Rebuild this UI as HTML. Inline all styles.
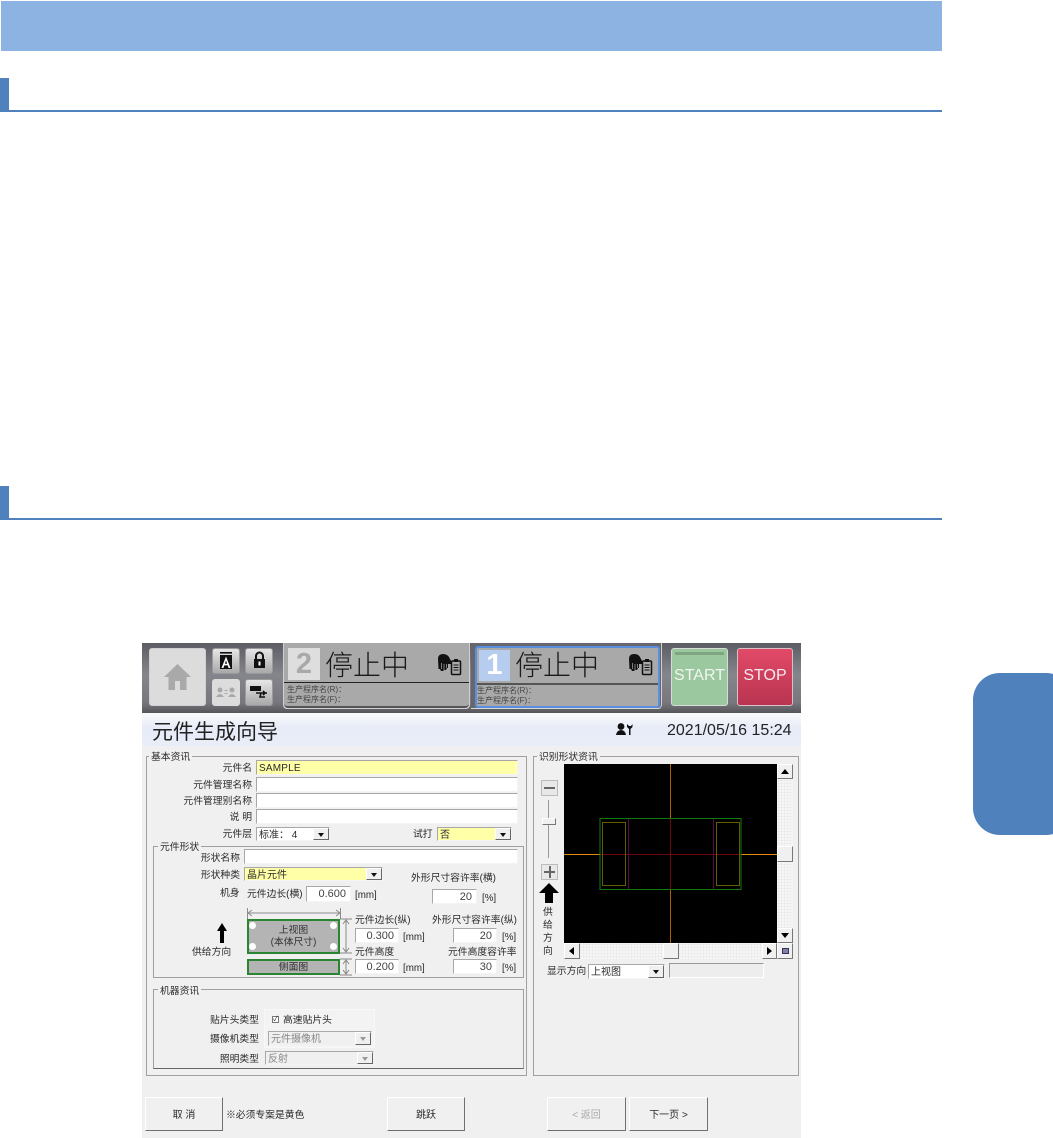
<!DOCTYPE html>
<html><head><meta charset="utf-8"><title>元件生成向导</title>
<style>
html,body{margin:0;padding:0;background:#fff;}
body{width:1053px;height:1138px;position:relative;overflow:hidden;font-family:"Liberation Sans","Noto Sans CJK SC",sans-serif;}
div,span.t{position:absolute;box-sizing:border-box;}
.t{font-size:9.8px;line-height:12px;height:12px;color:#2a2a2a;white-space:nowrap;margin-top:2px;}
.r{text-align:right;}
.c{text-align:center;}
.i{background:#fff;border:1px solid;border-color:#a8a8a8 #f4f4f4 #f4f4f4 #a8a8a8;font-size:10px;line-height:15px;color:#2a2a2a;white-space:nowrap;padding:0 2px;}
.y{background:#ffffa8;}
.n{text-align:right;font-size:11px;padding-right:4px;color:#444;}
.arr{width:16px;top:0;bottom:0;right:0;background:#f0f0f0;border:1px solid;border-color:#fff #666 #666 #fff;}
.arr:after{content:"";position:absolute;left:4px;top:4px;border:3.5px solid transparent;border-top:4px solid #111;border-bottom:0;}
.dis .arr:after{border-top-color:#999;}
.fs{border:1px solid #a0a0a0;}
.lg{background:#f0f0f0;padding:0 2px;}
.hb{background:linear-gradient(#e6e6e6,#a9a9a9);border:1px solid #9a9a9e;border-radius:3px;}
.b{background:#f0f0f0;border:1px solid;border-color:#fff #707070 #707070 #fff;font-size:10px;color:#2a2a2a;text-align:center;line-height:35px;}
.sb{background:#f0f0f0;border:1px solid;border-color:#fff #777 #777 #fff;}
.ck{background-color:#f6f6f6;background-image:radial-gradient(#e8e8e8 1px,transparent 1px);background-size:3px 3px;}
</style></head>
<body>
<div style="left:1px;top:1px;width:941px;height:50px;background:#8db3e2"></div>
<div style="left:0;top:78px;width:9px;height:34px;background:#4f81bd"></div>
<div style="left:0;top:110px;width:942px;height:2px;background:#4f81bd"></div>
<div style="left:0;top:486px;width:9px;height:34px;background:#4f81bd"></div>
<div style="left:0;top:518px;width:942px;height:2px;background:#4f81bd"></div>
<div style="left:973px;top:673px;width:100px;height:162px;background:#4f81bd;border-radius:27px"></div>

<div id="app" style="left:142px;top:643px;width:659px;height:495px;background:#f0f0f0;overflow:hidden"></div>

<!-- header -->
<div style="left:142px;top:643px;width:659px;height:70px;background:linear-gradient(#5c5c64,#85858c 45%,#77777d 85%,#55555a)"></div>
<div style="left:142px;top:713px;width:659px;height:33px;background:linear-gradient(#fbfbfb,#e7ecf8 45%,#e8edf8)"></div>

<div style="left:149px;top:648px;width:57px;height:58px;background:#dcdcdc;border-radius:3px;border:1px solid #d0d0d0"></div>
<svg style="position:absolute;left:163px;top:663px" width="29" height="28" viewBox="0 0 29 28"><path d="M14.5 1 L28 14 H23.5 V27 H17 V18 H12 V27 H5.5 V14 H1 Z" fill="#a9a9a9"/></svg>
<div class="hb" style="left:212px;top:648px;width:28px;height:26px"></div>
<svg style="position:absolute;left:219px;top:652px" width="14" height="18" viewBox="0 0 14 18"><rect x="1" y="0" width="12" height="1.6" fill="#111"/><rect x="1" y="3" width="12" height="14" fill="#111"/><path d="M7 4.5 L11.5 16 H9.6 L8.7 13.4 H5.3 L4.4 16 H2.5 Z M5.9 11.8 H8.1 L7 8.4 Z" fill="#fff" fill-rule="evenodd"/></svg>
<div class="hb" style="left:245px;top:648px;width:28px;height:26px"></div>
<svg style="position:absolute;left:253px;top:651px" width="13" height="18" viewBox="0 0 13 18"><path d="M3 8 V5 a3.5 3.5 0 0 1 7 0 V8" fill="none" stroke="#111" stroke-width="2"/><rect x="1" y="8" width="11" height="9" fill="#111"/><rect x="5.5" y="10.5" width="2" height="4" fill="#fff"/></svg>
<div style="left:212px;top:679px;width:28px;height:27px;background:#dcdcdc;border-radius:3px"></div>
<svg style="position:absolute;left:216px;top:687px" width="21" height="11" viewBox="0 0 21 11"><circle cx="4" cy="3" r="2.5" fill="#a9a9a9"/><path d="M0 10 Q4 4 8 10Z" fill="#a9a9a9"/><circle cx="16" cy="3" r="2.5" fill="#a9a9a9"/><path d="M12 10 Q16 4 20 10Z" fill="#a9a9a9"/><rect x="8.5" y="3" width="3" height="1" fill="#a9a9a9"/><rect x="8.5" y="6" width="3" height="1" fill="#a9a9a9"/></svg>
<div class="hb" style="left:245px;top:679px;width:28px;height:27px"></div>
<svg style="position:absolute;left:249px;top:685px" width="20" height="15" viewBox="0 0 20 15"><rect x="1" y="1" width="11" height="5" fill="#111"/><path d="M7 8 H18 M12 8 L11 12 H16 M14 6 L16 8 L14 10" stroke="#111" stroke-width="1.6" fill="none"/></svg>

<!-- panel 2 -->
<div style="left:283px;top:643px;width:187px;height:66px;background:#d0d0d0;border-radius:0 0 4px 4px"></div>
<div style="left:284px;top:643px;width:185px;height:65px;background:#a9a9a9;border-radius:0 0 4px 4px;border-bottom:2px solid #555"></div>
<div style="left:284px;top:682px;width:185px;height:1px;background:#222"></div>
<div style="left:288px;top:648px;width:32px;height:32px;background:#dedede;color:#a9a9a9;font:bold 29px/32px 'Liberation Sans';text-align:center">2</div>
<div class="t" style="margin:0;left:325px;top:647px;height:34px;font-size:28px;line-height:34px;color:#1a1a1a;font-family:'Noto Sans CJK SC',sans-serif;font-weight:300">停止中</div>
<svg style="position:absolute;left:437px;top:653px" width="26" height="23" viewBox="0 0 26 23"><path d="M1 6 Q1 1 6 1 Q10 1 12 4 L14 8 V11 H11 V15 H10 L9 17 H7 L6 18 H4 L3 16 H1.5Z" fill="#111"/><path d="M4.5 10V16M7 11V17M9.5 11V15" stroke="#a9a9a9" stroke-width=".7"/><rect x="14.5" y="8" width="9" height="13.5" rx="1" fill="none" stroke="#111" stroke-width="1.5"/><rect x="17" y="6" width="4" height="3" fill="#111"/><path d="M16.5 12H21.5M16.5 14.5H21.5M16.5 17H21.5" stroke="#111"/></svg>
<div class="t" style="margin-top:1px;left:287px;top:684px;font-size:8px;line-height:10px;color:#444;height:20px">生产程序名(R)：<br>生产程序名(F)：</div>

<!-- panel 1 -->
<div style="left:471px;top:643px;width:191px;height:66px;background:#66666c;border-right:1px solid #d0d0d0;border-bottom:1px solid #d8d8d8;border-radius:0 0 4px 0"></div>
<div style="left:475px;top:646px;width:185px;height:62px;background:#a9a9a9;border:2px solid #5a8fe0;border-radius:3px"></div>
<div style="left:477px;top:683px;width:181px;height:2px;background:#555"></div>
<div style="left:479px;top:650px;width:31px;height:31px;background:#b6cdf0;color:#fff;font:bold 29px/31px 'Liberation Sans';text-align:center">1</div>
<div class="t" style="margin:0;left:515px;top:647px;height:34px;font-size:28px;line-height:34px;color:#1a1a1a;font-family:'Noto Sans CJK SC',sans-serif;font-weight:300">停止中</div>
<svg style="position:absolute;left:628px;top:653px" width="26" height="23" viewBox="0 0 26 23"><path d="M1 6 Q1 1 6 1 Q10 1 12 4 L14 8 V11 H11 V15 H10 L9 17 H7 L6 18 H4 L3 16 H1.5Z" fill="#111"/><path d="M4.5 10V16M7 11V17M9.5 11V15" stroke="#a9a9a9" stroke-width=".7"/><rect x="14.5" y="8" width="9" height="13.5" rx="1" fill="none" stroke="#111" stroke-width="1.5"/><rect x="17" y="6" width="4" height="3" fill="#111"/><path d="M16.5 12H21.5M16.5 14.5H21.5M16.5 17H21.5" stroke="#111"/></svg>
<div class="t" style="margin-top:0;left:477px;top:686px;font-size:8px;line-height:10px;color:#444;height:20px">生产程序名(R)：<br>生产程序名(F)：</div>

<!-- start stop -->
<div style="left:671px;top:648px;width:57px;height:58px;background:#9bc89e;border:1px solid #d6dcd6;border-radius:3px"></div>
<div style="left:675px;top:652px;width:49px;height:3px;background:#7fa583"></div>
<div class="t c" style="margin:0;left:671px;top:667px;width:57px;height:18px;font-size:16px;line-height:18px;color:#f2f6f2">START</div>
<div style="left:737px;top:648px;width:56px;height:58px;background:linear-gradient(#e24a68,#b83450);border:1px solid #d8c0c6;border-radius:3px"></div>
<div class="t c" style="margin:0;left:737px;top:667px;width:56px;height:18px;font-size:16px;line-height:18px;color:#f6ecee">STOP</div>

<!-- title -->
<div class="t" style="margin-top:1px;left:152px;top:719px;height:26px;font-size:21px;line-height:26px;color:#222">元件生成向导</div>
<svg style="position:absolute;left:616px;top:723px" width="17" height="13" viewBox="0 0 17 13"><circle cx="5" cy="3.5" r="3.4" fill="#111"/><path d="M0 12 Q1 7 5 7 Q9 7 10 12Z" fill="#111"/><path d="M11 1 V4 L13 6 V12 H14.5 V6 L16.5 4 V1 L15 3 H13 Z" fill="#111"/></svg>
<div class="t" style="left:667px;top:720px;height:18px;font-size:16px;line-height:18px;color:#222">2021/05/16 15:24</div>

<!-- left fieldset -->
<div class="fs" style="left:146px;top:756px;width:381px;height:320px"></div>
<div class="t lg" style="left:149px;top:750px">基本资讯</div>

<div class="t r" style="left:160px;top:761px;width:92px">元件名</div>
<div class="i y" style="left:256px;top:760px;width:262px;height:15px;letter-spacing:.2px">SAMPLE</div>
<div class="t r" style="left:160px;top:778px;width:92px">元件管理名称</div>
<div class="i" style="left:256px;top:777px;width:262px;height:15px"></div>
<div class="t r" style="left:160px;top:794px;width:92px">元件管理别名称</div>
<div class="i" style="left:256px;top:793px;width:262px;height:15px"></div>
<div class="t r" style="left:160px;top:810px;width:92px">说 明</div>
<div class="i" style="left:256px;top:809px;width:262px;height:15px"></div>
<div class="t r" style="left:160px;top:827px;width:92px">元件层</div>
<div class="i" style="left:256px;top:827px;width:74px;height:14px">标准： 4<div class="arr"></div></div>
<div class="t" style="left:413px;top:827px">试打</div>
<div class="i y" style="left:437px;top:827px;width:75px;height:14px">否<div class="arr"></div></div>

<!-- shape fieldset -->
<div class="fs" style="left:153px;top:846px;width:371px;height:132px"></div>
<div class="t lg" style="left:158px;top:840px">元件形状</div>
<div class="t r" style="left:170px;top:851px;width:70px">形状名称</div>
<div class="i" style="left:244px;top:849px;width:274px;height:15px"></div>
<div class="t r" style="left:170px;top:868px;width:70px">形状种类</div>
<div class="i y" style="left:244px;top:867px;width:139px;height:14px">晶片元件<div class="arr"></div></div>
<div class="t" style="left:411px;top:871px">外形尺寸容许率(横)</div>
<div class="t" style="left:220px;top:886px">机身</div>
<div class="t" style="left:247px;top:887px">元件边长(横)</div>
<div class="i n" style="left:306px;top:886px;width:45px;height:16px">0.600</div>
<div class="t" style="left:355px;top:888px">[mm]</div>
<div class="i n" style="left:432px;top:889px;width:45px;height:15px;line-height:14px">20</div>
<div class="t" style="left:482px;top:891px">[%]</div>

<!-- diagram -->
<svg style="position:absolute;left:190px;top:905px" width="170" height="75" viewBox="0 0 170 75">
<path d="M57.5 3V14M150.5 3V14M58 8H150M62 5L58 8L62 11M146 5L150 8L146 11" fill="none" stroke="#8c8c8c"/>
<path d="M150 14H162M150 48H162M150 54H162M150 70H162" stroke="#888"/>
<path d="M156 15V47M153 19L156 15L159 19M153 43L156 47L159 43" fill="none" stroke="#888"/>
<path d="M156 55V69M153 59L156 55L159 59M153 65L156 69L159 65" fill="none" stroke="#888"/>
<path d="M32 18L27 26H30V38H34V26H37Z" fill="#000"/>
</svg>
<div style="left:247px;top:919px;width:93px;height:35px;background:#b4b4b4;border:2px solid #2a8432"></div>
<div style="left:249px;top:922px;width:7px;height:7px;border-radius:50%;background:#fff"></div>
<div style="left:330px;top:922px;width:7px;height:7px;border-radius:50%;background:#fff"></div>
<div style="left:249px;top:943px;width:7px;height:7px;border-radius:50%;background:#fff"></div>
<div style="left:330px;top:943px;width:7px;height:7px;border-radius:50%;background:#fff"></div>
<div class="t c" style="margin-top:1px;left:247px;top:924px;width:93px;height:24px;color:#333">上视图<br>(本体尺寸)</div>
<div style="left:247px;top:959px;width:93px;height:16px;background:#b4b4b4;border:2px solid #2a8432"></div>
<div class="t c" style="margin-top:0;left:247px;top:962px;width:93px">侧面图</div>
<div class="t" style="left:192px;top:945px">供给方向</div>

<div class="t" style="left:355px;top:913px">元件边长(纵)</div>
<div class="i n" style="left:355px;top:928px;width:44px;height:15px;line-height:14px">0.300</div>
<div class="t" style="left:403px;top:930px">[mm]</div>
<div class="t" style="left:432px;top:913px">外形尺寸容许率(纵)</div>
<div class="i n" style="left:453px;top:928px;width:44px;height:15px;line-height:14px">20</div>
<div class="t" style="left:502px;top:930px">[%]</div>
<div class="t" style="left:355px;top:945px">元件高度</div>
<div class="i n" style="left:355px;top:959px;width:44px;height:15px;line-height:14px">0.200</div>
<div class="t" style="left:403px;top:961px">[mm]</div>
<div class="t" style="left:448px;top:945px">元件高度容许率</div>
<div class="i n" style="left:453px;top:959px;width:44px;height:15px;line-height:14px">30</div>
<div class="t" style="left:502px;top:961px">[%]</div>

<!-- machine fieldset -->
<div class="fs" style="left:153px;top:989px;width:371px;height:80px;border-bottom-color:#666"></div>
<div class="t lg" style="left:158px;top:984px">机器资讯</div>
<div style="left:264px;top:1009px;width:111px;height:39px;background:#f3f3f3;border:1px solid #f8f8f8"></div>
<div class="t r" style="left:180px;top:1013px;width:79px">贴片头类型</div>
<div style="left:272px;top:1016px;width:7px;height:7px;border:1px solid #777;background:#fff;font-size:7px;line-height:6px;color:#222;text-align:center">✓</div>
<div class="t" style="left:283px;top:1013px">高速贴片头</div>
<div class="t r" style="left:180px;top:1032px;width:79px">摄像机类型</div>
<div class="i dis" style="left:268px;top:1031px;width:104px;height:15px;background:#f0f0f0;color:#888">元件摄像机<div class="arr"></div></div>
<div class="t r" style="left:180px;top:1052px;width:79px">照明类型</div>
<div class="i dis" style="left:265px;top:1051px;width:109px;height:14px;background:#f0f0f0;color:#888">反射<div class="arr"></div></div>

<!-- buttons -->
<div class="b" style="left:145px;top:1097px;width:78px;height:34px">取 消</div>
<div class="t" style="left:226px;top:1108px">※必须专案是黄色</div>
<div class="b" style="left:387px;top:1097px;width:78px;height:34px">跳跃</div>
<div class="b" style="left:547px;top:1097px;width:79px;height:34px;color:#aaa">&lt; 返回</div>
<div class="b" style="left:629px;top:1097px;width:79px;height:34px">下一页 &gt;</div>

<!-- right fieldset -->
<div class="fs" style="left:533px;top:756px;width:266px;height:320px"></div>
<div class="t lg" style="left:537px;top:750px">识别形状资讯</div>

<div class="sb" style="left:541px;top:780px;width:17px;height:16px;border-color:#bbb;background:#e8e8e8"></div>
<div style="left:544px;top:787px;width:11px;height:2px;background:#666"></div>
<div style="left:548px;top:800px;width:1px;height:58px;background:#999"></div>
<div class="sb" style="left:542px;top:818px;width:14px;height:7px"></div>
<div class="sb" style="left:541px;top:864px;width:17px;height:16px;border-color:#bbb;background:#e8e8e8"></div>
<div style="left:544px;top:871px;width:11px;height:2px;background:#666"></div>
<div style="left:549px;top:866px;width:2px;height:12px;background:#666"></div>
<svg style="position:absolute;left:538px;top:882px" width="22" height="22" viewBox="0 0 22 22"><path d="M11 1L21 11H15V21H7V11H1Z" fill="#000"/></svg>
<div class="t" style="left:543px;top:905px">供</div>
<div class="t" style="left:543px;top:918px">给</div>
<div class="t" style="left:543px;top:931px">方</div>
<div class="t" style="left:543px;top:944px">向</div>

<!-- black view -->
<svg style="position:absolute;left:564px;top:764px" width="213" height="179" viewBox="0 0 213 179">
<rect width="213" height="179" fill="#000"/>
<path d="M106.5 0V54M106.5 125V179" stroke="#b06000" stroke-width="1"/>
<path d="M0 90.5H36M177 90.5H213" stroke="#e08a10" stroke-width="1"/>
<path d="M106.5 54V125M36 90.5H177" stroke="#6e0808" stroke-width="1"/>
<path d="M64.5 54V125M149.5 54V125" stroke="#5a0a3a" stroke-width="1"/>
<rect x="38.5" y="58.5" width="23" height="63" fill="none" stroke="#5f5f00" stroke-width="1"/>
<rect x="152.5" y="58.5" width="23" height="63" fill="none" stroke="#5f5f00" stroke-width="1"/>
<rect x="36" y="54.5" width="141" height="71" fill="none" stroke="#0f7a0f" stroke-width="1"/>
</svg>

<!-- scrollbars -->
<div class="ck" style="left:777px;top:764px;width:16px;height:179px"></div>
<div class="sb" style="left:777px;top:764px;width:16px;height:15px"></div>
<div style="left:781px;top:769px;border:4px solid transparent;border-bottom:5px solid #000;border-top:0"></div>
<div class="sb" style="left:777px;top:846px;width:16px;height:16px"></div>
<div class="sb" style="left:777px;top:928px;width:16px;height:15px"></div>
<div style="left:781px;top:933px;border:4px solid transparent;border-top:5px solid #000;border-bottom:0"></div>
<div class="ck" style="left:564px;top:943px;width:213px;height:16px"></div>
<div class="sb" style="left:564px;top:943px;width:16px;height:16px"></div>
<div style="left:569px;top:947px;border:4px solid transparent;border-right:5px solid #000;border-left:0"></div>
<div class="sb" style="left:663px;top:943px;width:16px;height:16px"></div>
<div class="sb" style="left:762px;top:943px;width:15px;height:16px"></div>
<div style="left:767px;top:947px;border:4px solid transparent;border-left:5px solid #000;border-right:0"></div>
<div class="sb" style="left:777px;top:943px;width:16px;height:16px"></div>
<div style="left:782px;top:948px;width:7px;height:6px;background:#8080a8;border:1px solid #335"></div>

<div class="t" style="left:547px;top:964px">显示方向</div>
<div class="i" style="left:588px;top:964px;width:77px;height:15px">上视图<div class="arr"></div></div>
<div style="left:669px;top:963px;width:95px;height:15px;background:#ededed;border:1px solid;border-color:#999 #fff #fff #999"></div>
</body></html>
